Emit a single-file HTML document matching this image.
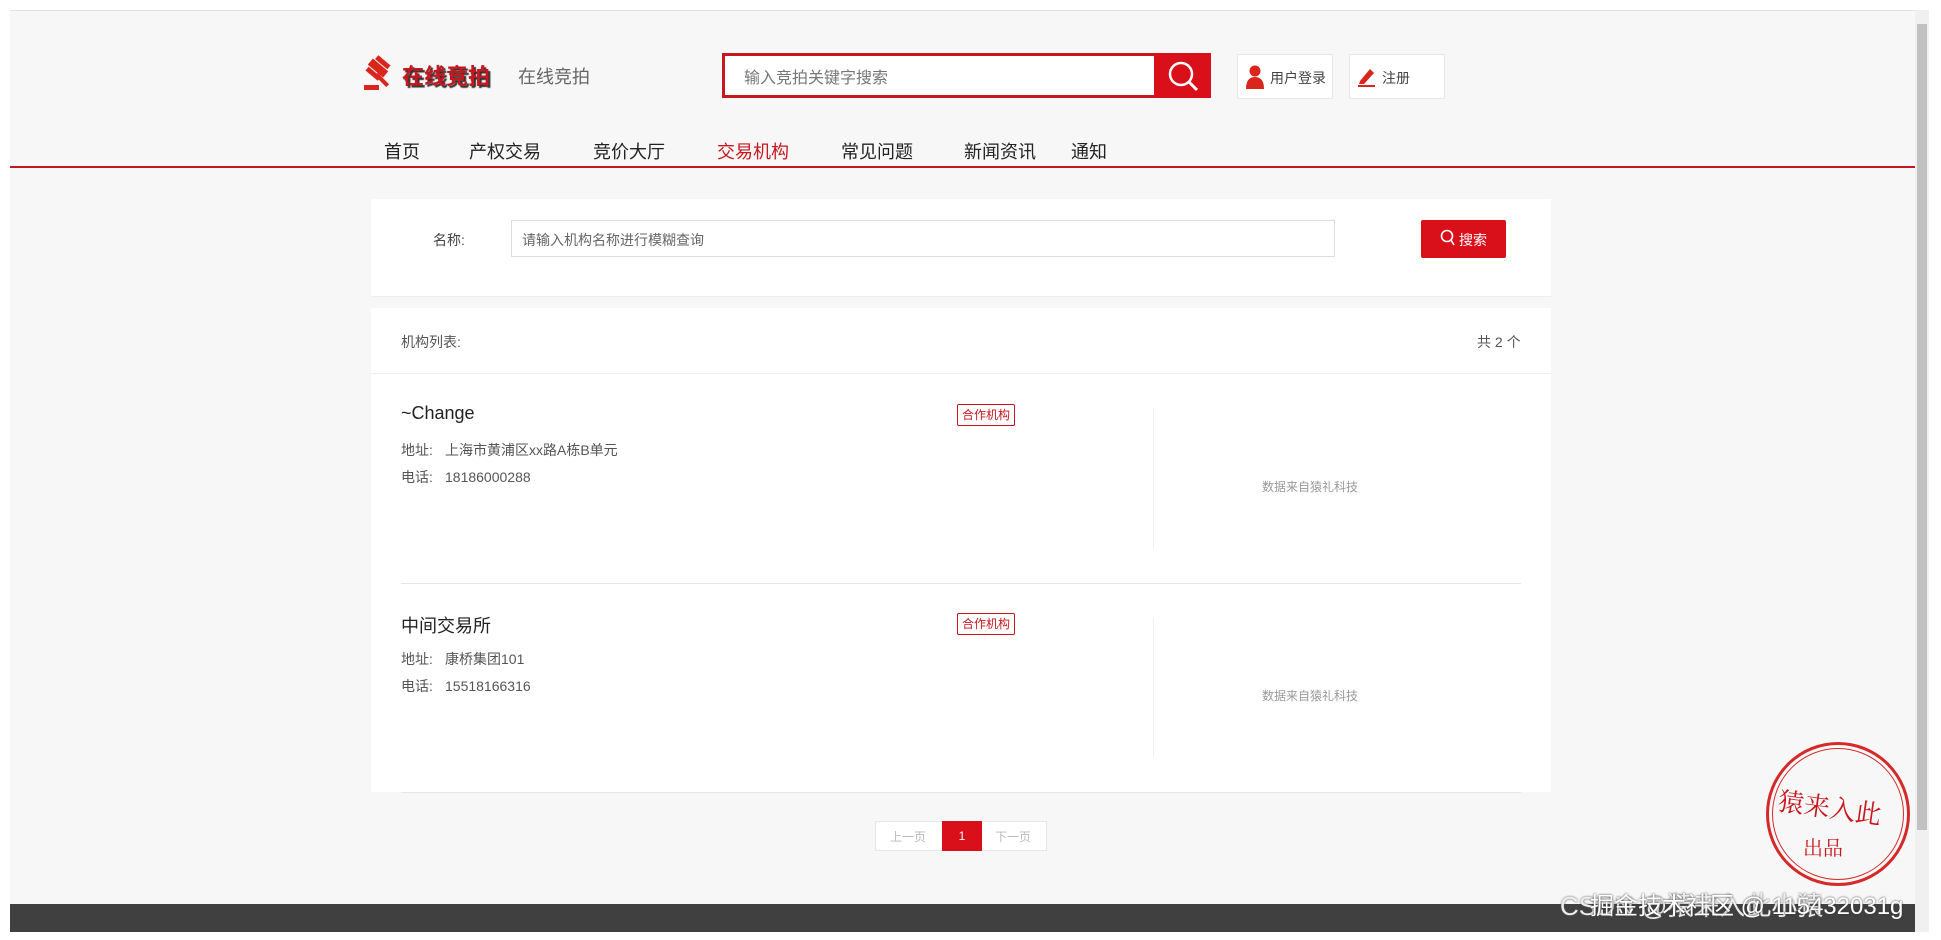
<!DOCTYPE html>
<html><head><meta charset="utf-8"><style>
*{margin:0;padding:0;box-sizing:border-box}
body{width:1941px;height:940px;background:#fff;position:relative;overflow:hidden;font-family:"Liberation Sans","Noto Sans CJK SC",sans-serif;color:#333}
.a{position:absolute}
.bg{left:10px;top:10px;width:1905px;height:894px;background:#f7f7f7;border-top:1px solid #e4e4e4}
.t{white-space:nowrap}
.lb{display:inline-block;width:44px}
</style></head><body>
<div class="a bg"></div>
<div class="a" style="left:1915px;top:10px;width:14px;height:922px;background:#f0f0f0"></div>
<div class="a" style="left:1917px;top:24px;width:10px;height:806px;background:#c1c1c1"></div>
<!-- logo -->
<svg class="a" style="left:362px;top:54px" width="38" height="38" viewBox="0 0 38 38">
<g fill="#d9251c"><g transform="rotate(-50 16 14)"><rect x="6" y="6" width="5" height="16"/><rect x="12" y="4" width="8" height="20"/><rect x="21" y="6" width="5" height="16"/></g><rect x="18" y="18" width="4" height="16" transform="rotate(-45 20 26)"/><rect x="2" y="31" width="15" height="5"/></g></svg>
<div class="a t" style="left:402px;top:59px;font-size:22px;font-weight:bold;color:#c8161e;text-shadow:2px 2px 1px #333">在线竞拍</div>
<div class="a t" style="left:518px;top:63px;font-size:18px;color:#666">在线竞拍</div>
<div class="a" style="left:722px;top:53px;width:489px;height:45px;border:3px solid #c8161e;background:#fff"></div>
<div class="a t" style="left:744px;top:64px;font-size:16px;color:#777">输入竞拍关键字搜索</div>
<div class="a" style="left:1154px;top:53px;width:57px;height:45px;background:#d90f1a"></div>
<svg class="a" style="left:1166px;top:59px" width="34" height="34" viewBox="0 0 34 34"><circle cx="15" cy="15" r="11" fill="none" stroke="#fff" stroke-width="2.5"/><line x1="23" y1="23" x2="31" y2="31" stroke="#fff" stroke-width="3"/></svg>
<div class="a" style="left:1237px;top:54px;width:96px;height:45px;background:#fff;border:1px solid #e6e6e6;border-radius:2px"></div>
<svg class="a" style="left:1245px;top:65px" width="20" height="24" viewBox="0 0 20 24"><circle cx="10" cy="6" r="5.5" fill="#d9251c"/><path d="M1 24 Q1 12 10 12 Q19 12 19 24Z" fill="#d9251c"/></svg>
<div class="a t" style="left:1270px;top:68px;font-size:14px;color:#444">用户登录</div>
<div class="a" style="left:1349px;top:54px;width:96px;height:45px;background:#fff;border:1px solid #e6e6e6;border-radius:2px"></div>
<svg class="a" style="left:1357px;top:66px" width="20" height="22" viewBox="0 0 20 22"><path d="M3 15 L13 3 L17 7 L7 18 L2 18Z" fill="#d9251c"/><rect x="1" y="19" width="17" height="2" fill="#d9251c"/></svg>
<div class="a t" style="left:1382px;top:68px;font-size:14px;color:#444">注册</div>
<!-- nav -->
<div class="a t" style="left:384px;top:138px;font-size:18px;color:#222">首页</div>
<div class="a t" style="left:469px;top:138px;font-size:18px;color:#222">产权交易</div>
<div class="a t" style="left:593px;top:138px;font-size:18px;color:#222">竞价大厅</div>
<div class="a t" style="left:717px;top:138px;font-size:18px;color:#c8161e">交易机构</div>
<div class="a t" style="left:841px;top:138px;font-size:18px;color:#222">常见问题</div>
<div class="a t" style="left:964px;top:138px;font-size:18px;color:#222">新闻资讯</div>
<div class="a t" style="left:1071px;top:138px;font-size:18px;color:#222">通知</div>
<div class="a" style="left:10px;top:166px;width:1905px;height:2px;background:#c8161e"></div>
<!-- search panel -->
<div class="a" style="left:371px;top:199px;width:1180px;height:98px;background:#fff;border-bottom:1px solid #eee"></div>
<div class="a t" style="left:433px;top:230px;font-size:14px;color:#444">名称:</div>
<div class="a" style="left:511px;top:220px;width:824px;height:37px;border:1px solid #ddd;background:#fff"></div>
<div class="a t" style="left:522px;top:230px;font-size:14px;color:#666">请输入机构名称进行模糊查询</div>
<div class="a" style="left:1421px;top:220px;width:85px;height:38px;background:#d90f1a;border-radius:2px"></div>
<svg class="a" style="left:1440px;top:229px" width="16" height="18" viewBox="0 0 16 18"><circle cx="7" cy="7" r="5.5" fill="none" stroke="#fff" stroke-width="1.6"/><line x1="11" y1="11" x2="14" y2="16" stroke="#fff" stroke-width="1.6"/></svg>
<div class="a t" style="left:1459px;top:230px;font-size:14px;color:#fff">搜索</div>
<!-- list panel -->
<div class="a" style="left:371px;top:308px;width:1180px;height:484px;background:#fff"></div>
<div class="a" style="left:371px;top:373px;width:1180px;height:1px;background:#eee"></div>
<div class="a t" style="left:401px;top:332px;font-size:14px;color:#555">机构列表:</div>
<div class="a t" style="left:1477px;top:332px;font-size:14px;color:#555">共 2 个</div>
<!-- item1 -->
<div class="a t" style="left:401px;top:403px;font-size:18px;color:#222">~Change</div>
<div class="a t" style="left:957px;top:404px;width:58px;height:22px;border:1px solid #c8161e;border-radius:2px;color:#c8161e;font-size:12px;text-align:center;line-height:20px">合作机构</div>
<div class="a t" style="left:401px;top:440px;font-size:14px;color:#555"><span class="lb">地址:</span>上海市黄浦区xx路A栋B单元</div>
<div class="a t" style="left:401px;top:467px;font-size:14px;color:#555"><span class="lb">电话:</span>18186000288</div>
<div class="a" style="left:1153px;top:408px;width:1px;height:140px;background:#eee"></div>
<div class="a t" style="left:1262px;top:478px;font-size:12px;color:#999">数据来自猿礼科技</div>
<div class="a" style="left:401px;top:583px;width:1120px;height:1px;background:#e6e6e6"></div>
<!-- item2 -->
<div class="a t" style="left:401px;top:612px;font-size:18px;color:#222">中间交易所</div>
<div class="a t" style="left:957px;top:613px;width:58px;height:22px;border:1px solid #c8161e;border-radius:2px;color:#c8161e;font-size:12px;text-align:center;line-height:20px">合作机构</div>
<div class="a t" style="left:401px;top:649px;font-size:14px;color:#555"><span class="lb">地址:</span>康桥集团101</div>
<div class="a t" style="left:401px;top:676px;font-size:14px;color:#555"><span class="lb">电话:</span>15518166316</div>
<div class="a" style="left:1153px;top:617px;width:1px;height:140px;background:#eee"></div>
<div class="a t" style="left:1262px;top:687px;font-size:12px;color:#999">数据来自猿礼科技</div>
<div class="a" style="left:401px;top:792px;width:1120px;height:1px;background:#e6e6e6"></div>
<!-- pagination -->
<div class="a" style="left:875px;top:821px;width:172px;height:30px;border:1px solid #e6e6e6;background:#fff"></div>
<div class="a t" style="left:890px;top:828px;font-size:12px;color:#bbb">上一页</div>
<div class="a" style="left:942px;top:821px;width:40px;height:30px;background:#d90f1a;color:#fff;font-size:12px;text-align:center;line-height:30px">1</div>
<div class="a t" style="left:995px;top:828px;font-size:12px;color:#bbb">下一页</div>
<!-- footer -->
<div class="a" style="left:10px;top:904px;width:1905px;height:28px;background:#404040"></div>
<!-- stamp -->
<div class="a" style="left:1766px;top:742px;width:144px;height:144px;border:3px solid #d42a2a;border-radius:50%"></div>
<div class="a" style="left:1772px;top:748px;width:132px;height:132px;border:1.5px solid #d42a2a;border-radius:50%"></div>
<div class="a t" style="left:1778px;top:788px;font-size:26px;color:#c8161e;font-family:'Noto Serif CJK SC',serif;transform:rotate(8deg)">猿来入此</div>
<div class="a t" style="left:1803px;top:832px;font-size:20px;color:#c8161e;font-family:'Noto Serif CJK SC',serif">出品</div>
<div class="a t" style="left:1560px;top:886px;font-size:26px;color:#eee;text-shadow:0 0 2px #555">CSDN @猿来入此小猿</div>
<div class="a t" style="left:1590px;top:886px;font-size:24px;color:#fff;text-shadow:0 0 2px #333">掘金技术社区 @ 115432031g</div>
</body></html>
